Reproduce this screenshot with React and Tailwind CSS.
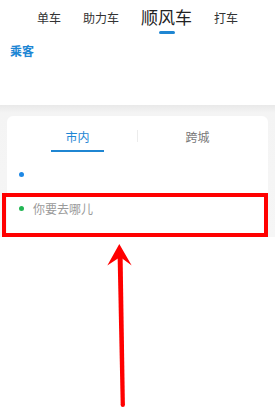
export default function App() {
  const font = { fontFamily: '"Noto Sans CJK SC", "Noto Sans", sans-serif' };
  return (
    <div className="relative w-[275px] h-[419px] bg-white overflow-hidden" style={font}>
      {/* header */}
      <div className="h-[105px] bg-white">
        <div className="flex justify-center items-start gap-[22px] pt-[8px]">
          <div className="mt-[4px] text-[12px] leading-[12px] text-[#333]">单车</div>
          <div className="mt-[4px] text-[12px] leading-[12px] text-[#333]">助力车</div>
          <div className="flex flex-col items-center">
            <div className="text-[17px] leading-[17px] text-[#222]">顺风车</div>
            <div className="mt-[6px] h-[2.5px] w-[16px] rounded-full bg-[#1f86d2]" />
          </div>
          <div className="mt-[4px] text-[12px] leading-[12px] text-[#333]">打车</div>
        </div>
        <div className="mt-[11px] px-[10px] text-[12px] leading-[12px] font-bold text-[#1d86d4]">乘客</div>
      </div>

      {/* gray section with card */}
      <div className="h-[132px] bg-[linear-gradient(to_bottom,#e9e9e9,#f4f4f4_8px,#f6f6f6)] pt-[11px]">
        <div className="mx-[7px] h-[121px] rounded-t-[6px] bg-white flex flex-col">
          <div className="mx-[11px] pt-[15px] flex items-start">
            <div className="flex-1 flex flex-col items-center">
              <div className="text-[12px] leading-[12px] text-[#1d86d4]">市内</div>
              <div className="mt-[6.5px] h-[2px] w-[53px] bg-[#1f86d2]" />
            </div>
            <div className="mt-[-1.5px] w-px h-[12px] bg-[#ececec]" />
            <div className="flex-1 flex flex-col items-center">
              <div className="text-[12px] leading-[12px] text-[#777]">跨城</div>
            </div>
          </div>
          <div className="mt-[6px] h-[34px] flex items-center pl-[12px]">
            <div className="w-[5px] h-[5px] rounded-full bg-[#1e88e5]" />
          </div>
          <div className="h-[34px] flex items-center pl-[12px] gap-[9px]">
            <div className="w-[5px] h-[5px] rounded-full bg-[#22b654]" />
            <div className="text-[12px] leading-[12px] text-[#9a9a9a]">你要去哪儿</div>
          </div>
        </div>
      </div>

      {/* annotation canvas */}
      <div className="h-[182px] bg-white">
        <svg width="275" height="182" viewBox="0 0 275 182" className="block">
          <polygon points="119.3,7 131.7,28.5 120.2,20 107.3,28.5" fill="#ff0000" />
          <polygon points="117.6,19 122.6,19 124.9,168 120.7,168" fill="#ff0000" />
          <circle cx="122.8" cy="168" r="2.1" fill="#ff0000" />
        </svg>
      </div>

      {/* red highlight box */}
      <div className="absolute left-[2px] top-[193px] w-[266px] h-[44px] border-[4px] border-[#ff0000]" />
    </div>
  );
}
